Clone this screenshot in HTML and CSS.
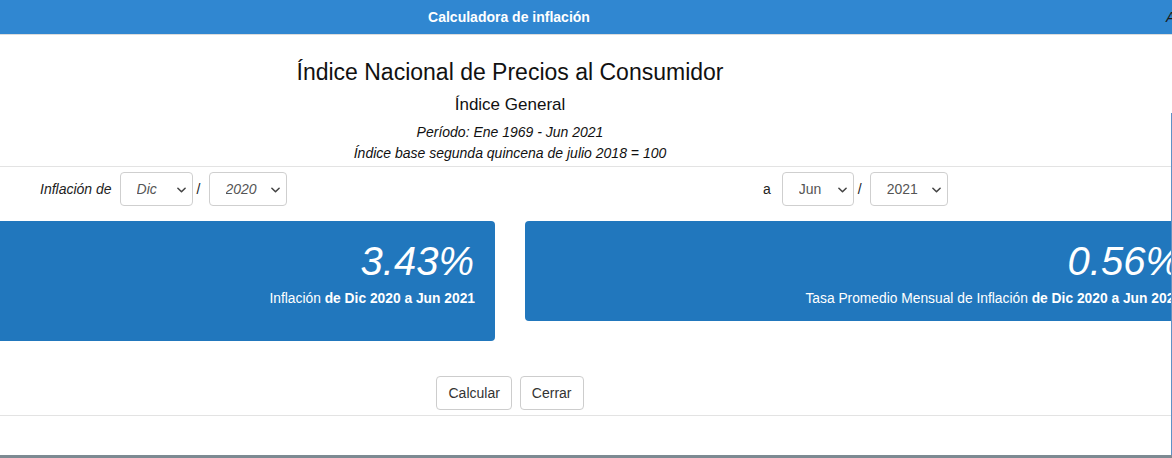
FILE: index.html
```html
<!DOCTYPE html>
<html lang="es">
<head>
    <meta charset="utf-8">
    <title>Calculadora de inflación</title>
    <link rel="stylesheet" href="styles.css">
</head>
<body>
    <header class="topbar">
        <span class="topbar-title">Calculadora de inflación</span>
        <span class="topbar-extra">Ayuda</span>
    </header>

    <main class="modal">
        <section class="intro">
            <h1>Índice Nacional de Precios al Consumidor</h1>
            <h2>Índice General</h2>
            <p class="note">Período: Ene 1969 - Jun 2021</p>
            <p class="note">Índice base segunda quincena de julio 2018 = 100</p>
        </section>

        <section class="calc">
            <div class="cols">
                <div class="period period-from">
                    <label class="period-label" for="mesDe">Inflación de</label>
                    <div class="select sel-month-from">
                        <select id="mesDe"><option>Dic</option></select>
                        <svg class="chev" viewBox="0 0 10 6"><path d="M1 1l4 4 4-4"/></svg>
                    </div>
                    <span class="slash">/</span>
                    <div class="select sel-year">
                        <select id="anioDe"><option>2020</option></select>
                        <svg class="chev" viewBox="0 0 10 6"><path d="M1 1l4 4 4-4"/></svg>
                    </div>
                </div>
                <div class="period period-to">
                    <label class="period-label" for="mesA">a</label>
                    <div class="select sel-month-to">
                        <select id="mesA"><option>Jun</option></select>
                        <svg class="chev" viewBox="0 0 10 6"><path d="M1 1l4 4 4-4"/></svg>
                    </div>
                    <span class="slash">/</span>
                    <div class="select sel-year">
                        <select id="anioA"><option>2021</option></select>
                        <svg class="chev" viewBox="0 0 10 6"><path d="M1 1l4 4 4-4"/></svg>
                    </div>
                </div>
            </div>

            <div class="cols results">
                <div class="result result-tall">
                    <div class="result-value">3.43%</div>
                    <div class="result-caption">Inflación <b>de Dic 2020 a Jun 2021</b></div>
                </div>
                <div class="result">
                    <div class="result-value">0.56%</div>
                    <div class="result-caption">Tasa Promedio Mensual de Inflación <b>de Dic 2020 a Jun 2021</b></div>
                </div>
            </div>
        </section>

        <div class="actions">
            <button class="btn" type="button">Calcular</button>
            <button class="btn" type="button">Cerrar</button>
        </div>
    </main>

    <div class="edge-line"></div>
    <div class="bottombar"></div>
</body>
</html>
```

FILE: styles.css
```css
html, body {
    margin: 0;
    padding: 0;
}

body {
    position: relative;
    width: 1172px;
    height: 458px;
    overflow: hidden;
    display: flex;
    flex-direction: column;
    font-family: "Liberation Sans", Arial, Helvetica, sans-serif;
    font-size: 14px;
    color: #222;
    background-color: #fff;
}

/* barra superior */
.topbar {
    flex: 0 0 auto;
    display: flex;
    height: 34px;
    line-height: 34px;
    background-color: #3087d1;
    border-bottom: 1px solid #dcdcdc;
    white-space: nowrap;
    overflow: hidden;
}

.topbar-title {
    flex: 0 0 1018px;
    text-align: center;
    color: #fff;
    font-weight: bold;
    font-size: 14px;
}

.topbar-extra {
    margin-left: 148px;
    color: #1b1b1b;
    font-style: italic;
}

/* ventana */
.modal {
    flex: 1 1 auto;
    box-sizing: border-box;
    width: 1414px;
    margin-left: -197px;
    padding: 0 15px;
}

.intro {
    text-align: center;
    color: #111;
    padding: 24px 0 2px;
    border-bottom: 1px solid #e3e3e3;
}

.intro h1 {
    margin: 0;
    font-size: 23px;
    line-height: 26px;
    font-weight: normal;
}

.intro h2 {
    margin: 10px 0 7px;
    font-size: 17px;
    line-height: 20px;
    font-weight: normal;
}

.note {
    margin: 0;
    font-size: 14px;
    line-height: 21px;
    font-style: italic;
}

/* formulario */
.calc {
    padding-top: 5px;
}

.cols {
    display: grid;
    grid-template-columns: 1fr 1fr;
    column-gap: 30px;
}

.period {
    display: flex;
    align-items: center;
}

.period-from {
    padding-left: 222px;
}

.period-to {
    padding-left: 238px;
}

.period-label {
    margin-right: 8px;
}

.period-from .period-label {
    font-style: italic;
}

.period-to .period-label {
    margin-right: 11px;
}

.slash {
    margin: 0 8px 0 4px;
}

.select {
    position: relative;
    height: 34px;
}

.sel-month-from { width: 73px; }
.sel-month-to { width: 72px; }
.sel-year { width: 78px; }

.select select {
    -webkit-appearance: none;
    appearance: none;
    box-sizing: border-box;
    width: 100%;
    height: 34px;
    margin: 0;
    padding: 0 0 0 16px;
    font-family: "Liberation Sans", Arial, Helvetica, sans-serif;
    font-size: 14px;
    color: #555;
    background-color: #fff;
    border: 1px solid #cfcfcf;
    border-radius: 4px;
    outline: none;
}

.period-from select {
    font-style: italic;
}

.chev {
    position: absolute;
    right: 7px;
    top: 15px;
    width: 9px;
    height: 6px;
    fill: none;
    stroke: #444;
    stroke-width: 1.7;
    stroke-linecap: round;
    stroke-linejoin: round;
    pointer-events: none;
}

/* resultados */
.results {
    margin-top: 15px;
    align-items: start;
}

.result {
    box-sizing: border-box;
    height: 100px;
    padding: 18px 20px 0 0;
    text-align: right;
    color: #fff;
    background-color: #2177bd;
    border-radius: 4px;
}

.result-tall {
    height: 120px;
}

.result-value {
    font-size: 40px;
    line-height: 44px;
    font-style: italic;
    padding-right: 1px;
}

.result-caption {
    margin-top: 6px;
    font-size: 13.8px;
    line-height: 20px;
}

/* botones */
.actions {
    display: flex;
    justify-content: center;
    gap: 8px;
    margin-top: 35px;
    padding-bottom: 5px;
    border-bottom: 1px solid #e3e3e3;
}

.btn {
    height: 34px;
    padding: 0 11px;
    font-family: "Liberation Sans", Arial, Helvetica, sans-serif;
    font-size: 14px;
    color: #333;
    background-color: #fff;
    border: 1px solid #cdcdcd;
    border-radius: 4px;
    cursor: pointer;
}

.edge-line {
    position: absolute;
    left: 1171px;
    top: 113px;
    width: 1px;
    height: 342px;
    background-color: #5d92c6;
}

.bottombar {
    flex: 0 0 3px;
    background-color: #7d8a92;
}
```
